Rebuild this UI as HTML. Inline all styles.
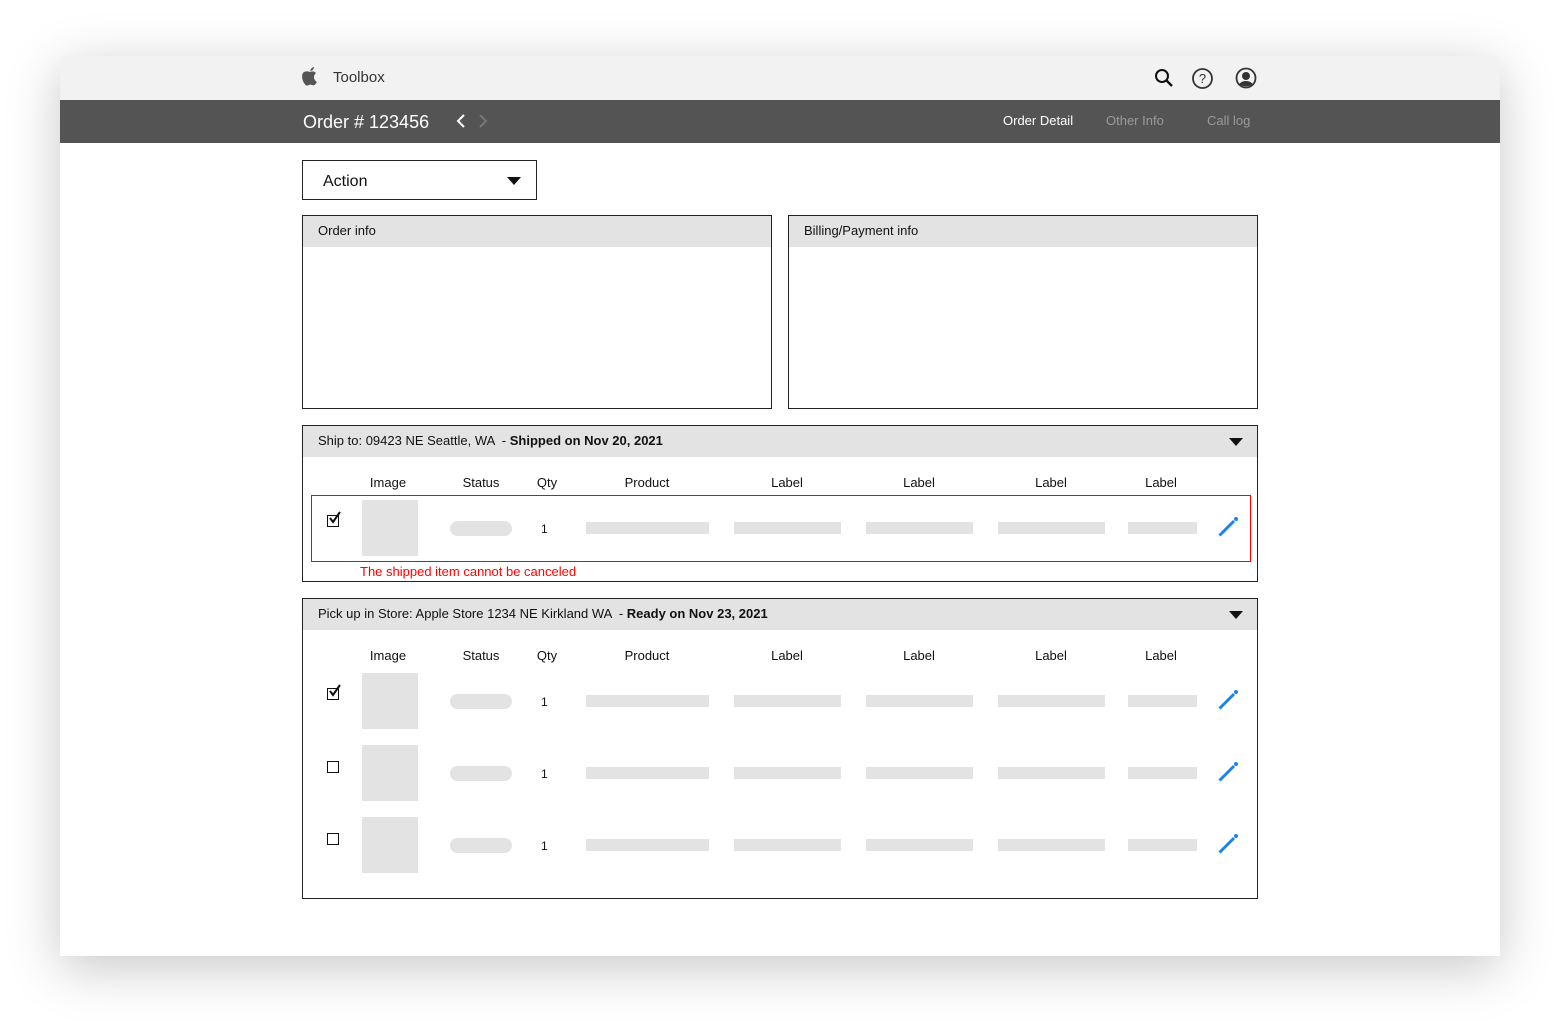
<!DOCTYPE html>
<html><head><meta charset="utf-8"><style>
*{margin:0;padding:0;box-sizing:border-box}
body{width:1560px;height:1020px;background:#fff;position:relative;overflow:hidden;font-family:"Liberation Sans",Arial,sans-serif;color:#111}
.a{position:absolute}
.win{left:60px;top:56px;width:1440px;height:900px;background:#fff;box-shadow:0 12px 50px rgba(0,0,0,0.22)}
.top{left:60px;top:56px;width:1440px;height:44px;background:#f2f2f2}
.bar{left:60px;top:100px;width:1440px;height:43px;background:#545454}
.box{border:1px solid #222;background:#fff}
.hd{background:#e3e3e3;font-size:13px;padding-left:15px;line-height:29px;height:31px;color:#111}
.ch{font-size:13px;text-align:center;width:100px;margin-left:-50px}
.g{background:#e3e3e3}
.pill{background:#e3e3e3;border-radius:8px;height:15px;width:62px;left:450px}
.cb{width:12px;height:12px;border:1.5px solid #111;left:327px}
.q{font-size:12px;left:541px}
</style></head><body>
<div class="a win"></div>
<div class="a top"></div>
<svg class="a" style="left:301px;top:66px" width="18" height="21" viewBox="0 0 18 21"><path d="M9 5 C10 2 12 1 13 1 C13 3 11 5 9 5Z M9 6 C7 5 5 5 3 6 C0 8 1 14 3 17 C5 20 6 20 8 19 C9 18.5 10 18.5 11 19 C13 20 14 19 16 16 C14 15 13 13 13 11 C13 9 14 8 15 7 C13 5 11 5 9 6Z" fill="#555"/></svg>
<div class="a" style="left:333px;top:69px;font-size:15px;color:#333">Toolbox</div>
<svg class="a" style="left:1154px;top:68px" width="20" height="20" viewBox="0 0 20 20"><circle cx="8" cy="8" r="6" fill="none" stroke="#111" stroke-width="2"/><path d="M12.5 12.5 L18 18" stroke="#111" stroke-width="2.4"/></svg>
<svg class="a" style="left:1191px;top:67px" width="23" height="23" viewBox="0 0 23 23"><circle cx="11.5" cy="11.5" r="9.5" fill="none" stroke="#333" stroke-width="1.8"/><text x="11.5" y="16" font-size="13" text-anchor="middle" font-family="Liberation Sans" fill="#333">?</text></svg>
<svg class="a" style="left:1235px;top:67px" width="22" height="22" viewBox="0 0 22 22"><circle cx="11" cy="11" r="9.5" fill="none" stroke="#333" stroke-width="1.8"/><circle cx="11" cy="9" r="4" fill="#333"/><path d="M4.5 17 C7 13 15 13 17.5 17 C15 20 7 20 4.5 17Z" fill="#333"/></svg>
<div class="a bar"></div>
<div class="a" style="left:303px;top:112px;font-size:18px;color:#fff">Order # 123456</div>
<svg class="a" style="left:455px;top:113px" width="40" height="16" viewBox="0 0 40 16"><path d="M9 2 L3 8 L9 14" fill="none" stroke="#fff" stroke-width="2"/><path d="M25 2 L31 8 L25 14" fill="none" stroke="#777" stroke-width="2"/></svg>
<div class="a" style="left:1003px;top:113px;font-size:13px;color:#fff">Order Detail</div>
<div class="a" style="left:1106px;top:113px;font-size:13px;color:#9a9a9a">Other Info</div>
<div class="a" style="left:1207px;top:113px;font-size:13px;color:#9a9a9a">Call log</div>

<div class="a box" style="left:302px;top:160px;width:235px;height:40px"></div>
<div class="a" style="left:323px;top:173px;font-size:16px">Action</div>
<svg class="a" style="left:507px;top:177px" width="14" height="8"><path d="M0 0 L14 0 L7 8Z" fill="#111"/></svg>

<div class="a box" style="left:302px;top:215px;width:470px;height:194px"><div class="hd">Order info</div></div>
<div class="a box" style="left:788px;top:215px;width:470px;height:194px"><div class="hd">Billing/Payment info</div></div>

<div class="a box" style="left:302px;top:425px;width:956px;height:157px"><div class="hd">Ship to: 09423 NE Seattle, WA &nbsp;- <b>Shipped on Nov 20, 2021</b></div></div>
<svg class="a" style="left:1229px;top:438px" width="14" height="8"><path d="M0 0 L14 0 L7 8Z" fill="#111"/></svg>
<div class="a ch" style="left:388px;top:475px">Image</div><div class="a ch" style="left:481px;top:475px">Status</div><div class="a ch" style="left:547px;top:475px">Qty</div><div class="a ch" style="left:647px;top:475px">Product</div><div class="a ch" style="left:787px;top:475px">Label</div><div class="a ch" style="left:919px;top:475px">Label</div><div class="a ch" style="left:1051px;top:475px">Label</div><div class="a ch" style="left:1161px;top:475px">Label</div>
<div class="a" style="left:311px;top:495px;width:940px;height:67px;border:1px solid #f00"></div>
<div class="a" style="left:360px;top:564px;font-size:13px;color:#f00">The shipped item cannot be canceled</div>

<div class="a box" style="left:302px;top:598px;width:956px;height:301px"><div class="hd">Pick up in Store: Apple Store 1234 NE Kirkland WA &nbsp;- <b>Ready on Nov 23, 2021</b></div></div>
<svg class="a" style="left:1229px;top:611px" width="14" height="8"><path d="M0 0 L14 0 L7 8Z" fill="#111"/></svg>
<div class="a ch" style="left:388px;top:648px">Image</div><div class="a ch" style="left:481px;top:648px">Status</div><div class="a ch" style="left:547px;top:648px">Qty</div><div class="a ch" style="left:647px;top:648px">Product</div><div class="a ch" style="left:787px;top:648px">Label</div><div class="a ch" style="left:919px;top:648px">Label</div><div class="a ch" style="left:1051px;top:648px">Label</div><div class="a ch" style="left:1161px;top:648px">Label</div>

<div class="a cb" style="top:515px"></div><svg class="a" style="left:328px;top:511px" width="14" height="14"><path d="M2 7 L5 11 L12 1" fill="none" stroke="#111" stroke-width="2"/></svg>
<div class="a g" style="left:362px;top:500px;width:56px;height:56px"></div>
<div class="a pill" style="top:521px"></div><div class="a q" style="top:522px">1</div>
<div class="a g" style="left:586px;top:522px;width:123px;height:12px"></div><div class="a g" style="left:734px;top:522px;width:107px;height:12px"></div><div class="a g" style="left:866px;top:522px;width:107px;height:12px"></div><div class="a g" style="left:998px;top:522px;width:107px;height:12px"></div><div class="a g" style="left:1128px;top:522px;width:69px;height:12px"></div>
<svg class="a" style="left:1216px;top:515px" width="24" height="24"><path d="M3.5 20.5 L18 6" stroke="#1a82f7" stroke-width="3"/><circle cx="20" cy="4" r="2" fill="#1a82f7"/></svg>

<div class="a cb" style="top:688px"></div><svg class="a" style="left:328px;top:684px" width="14" height="14"><path d="M2 7 L5 11 L12 1" fill="none" stroke="#111" stroke-width="2"/></svg>
<div class="a g" style="left:362px;top:673px;width:56px;height:56px"></div>
<div class="a pill" style="top:694px"></div><div class="a q" style="top:695px">1</div>
<div class="a g" style="left:586px;top:695px;width:123px;height:12px"></div><div class="a g" style="left:734px;top:695px;width:107px;height:12px"></div><div class="a g" style="left:866px;top:695px;width:107px;height:12px"></div><div class="a g" style="left:998px;top:695px;width:107px;height:12px"></div><div class="a g" style="left:1128px;top:695px;width:69px;height:12px"></div>
<svg class="a" style="left:1216px;top:688px" width="24" height="24"><path d="M3.5 20.5 L18 6" stroke="#1a82f7" stroke-width="3"/><circle cx="20" cy="4" r="2" fill="#1a82f7"/></svg>

<div class="a cb" style="top:761px"></div>
<div class="a g" style="left:362px;top:745px;width:56px;height:56px"></div>
<div class="a pill" style="top:766px"></div><div class="a q" style="top:767px">1</div>
<div class="a g" style="left:586px;top:767px;width:123px;height:12px"></div><div class="a g" style="left:734px;top:767px;width:107px;height:12px"></div><div class="a g" style="left:866px;top:767px;width:107px;height:12px"></div><div class="a g" style="left:998px;top:767px;width:107px;height:12px"></div><div class="a g" style="left:1128px;top:767px;width:69px;height:12px"></div>
<svg class="a" style="left:1216px;top:760px" width="24" height="24"><path d="M3.5 20.5 L18 6" stroke="#1a82f7" stroke-width="3"/><circle cx="20" cy="4" r="2" fill="#1a82f7"/></svg>

<div class="a cb" style="top:833px"></div>
<div class="a g" style="left:362px;top:817px;width:56px;height:56px"></div>
<div class="a pill" style="top:838px"></div><div class="a q" style="top:839px">1</div>
<div class="a g" style="left:586px;top:839px;width:123px;height:12px"></div><div class="a g" style="left:734px;top:839px;width:107px;height:12px"></div><div class="a g" style="left:866px;top:839px;width:107px;height:12px"></div><div class="a g" style="left:998px;top:839px;width:107px;height:12px"></div><div class="a g" style="left:1128px;top:839px;width:69px;height:12px"></div>
<svg class="a" style="left:1216px;top:832px" width="24" height="24"><path d="M3.5 20.5 L18 6" stroke="#1a82f7" stroke-width="3"/><circle cx="20" cy="4" r="2" fill="#1a82f7"/></svg>
</body></html>
